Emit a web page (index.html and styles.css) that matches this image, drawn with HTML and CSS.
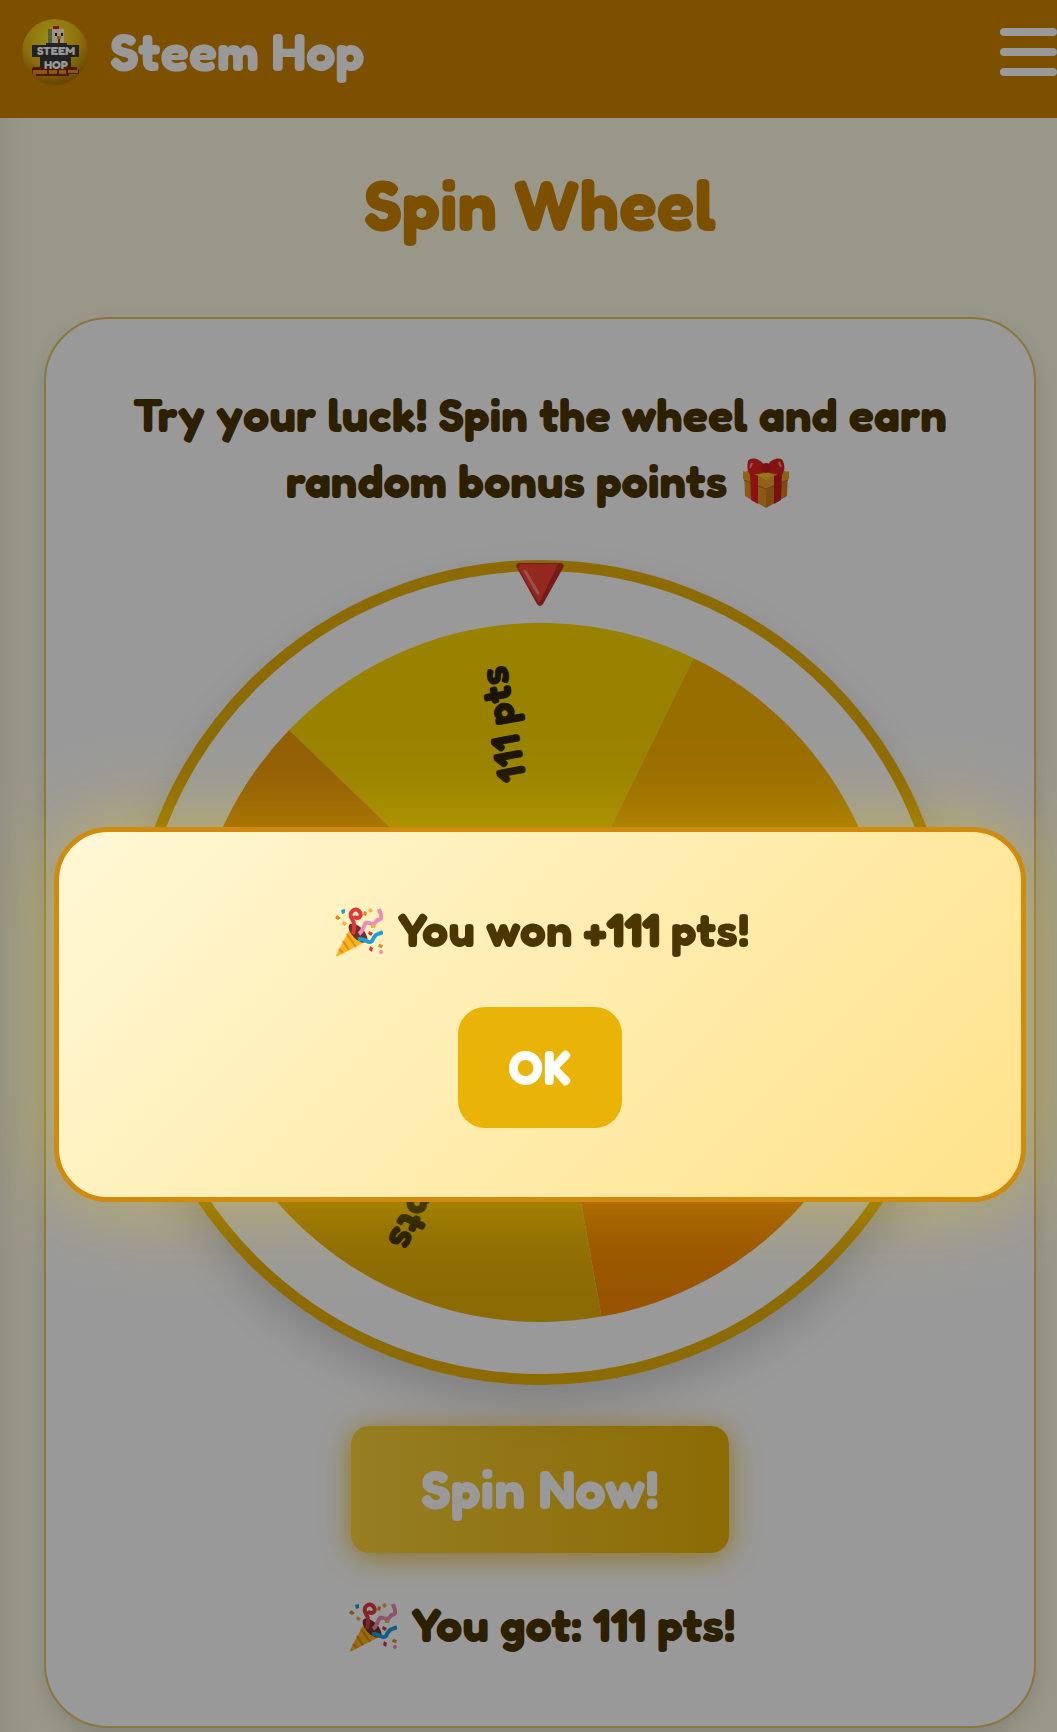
FILE: index.html
```html
<!DOCTYPE html>
<html lang="en">
<head>
    <meta charset="UTF-8">
    <meta name="viewport" content="width=device-width, initial-scale=1.0">
    <title>Steem Hop - Spin Wheel</title>
    <link rel="stylesheet" href="styles.css">
</head>
<body>
    <!-- shared party popper icon -->
    <svg class="icon-defs" aria-hidden="true">
        <symbol id="party" viewBox="0 0 48 50">
            <path d="M17 18 L1 48 Q0 50 3 49 L32 34 Z" fill="#fbb520"/>
            <path d="M12 27 L21 40 M8 34 L14 43 M4 42 L8 46" stroke="#e8870c" stroke-width="2" fill="none"/>
            <ellipse cx="23" cy="26" rx="12" ry="6" transform="rotate(46 23 26)" fill="#6d3329"/>
            <path d="M18 27 C20 20 20 16 17 12 C13 5 20 0 24 4 C29 9 22 14 19 9" stroke="#e0393c" stroke-width="4" fill="none"/>
            <path d="M24 27 C30 23 28 14 34 16 C42 19 41 12 43 13 C49 12 45 6 44 2" stroke="#f08bb8" stroke-width="4" fill="none"/>
            <path d="M23 32 C33 31 32 38 37 34 C41 25 43 28 48 25" stroke="#189fdc" stroke-width="4" fill="none"/>
            <path d="M6 3 L10 2 L10 6 L7 7 Z" fill="#189fdc"/>
            <path d="M2 8 L6 11 L3 13 L0 11 Z M29 4 L32 5 L31 9 L28 8 Z M44 37 L48 38 L47 41 L43 40 Z" fill="#e08a1e"/>
            <path d="M8 14 L12 16 L10 19 L7 17 Z M36 1 L38 4 L35 6 L33 3 Z M36 18 L41 18 L40 21 L36 21 Z" fill="#f3b13a"/>
            <path d="M34 24 L38 26 L36 29 L33 27 Z M35 39 L38 41 L37 45 L34 43 Z" fill="#d23a3a"/>
            <circle cx="46" cy="45" r="2" fill="#f08bb8"/>
        </symbol>
    </svg>

    <header class="header">
        <a class="brand" href="#">
            <svg class="logo" viewBox="0 0 66 66" aria-hidden="true">
                <defs>
                    <radialGradient id="ball" cx="45%" cy="28%" r="75%">
                        <stop offset="0" stop-color="#fff02a"/>
                        <stop offset="0.55" stop-color="#eebb14"/>
                        <stop offset="1" stop-color="#a36a05"/>
                    </radialGradient>
                </defs>
                <circle cx="33" cy="33" r="33" fill="url(#ball)"/>
                <path d="M31 7 H37 V11 H31 Z" fill="#d0271b"/>
                <path d="M26 10 H42 V25 H26 Z" fill="#fff6dc"/>
                <path d="M26 10 H30 V25 H26 Z" fill="#8fa05a"/>
                <path d="M33 14 H35 V17 H33 Z M39 14 H41 V17 H39 Z" fill="#2b1a10"/>
                <path d="M35 17 H39 V20 H35 Z" fill="#f59a14"/>
                <path d="M36 20 H38 V24 H36 Z" fill="#cf2a1a"/>
                <path d="M10 26 H24 V24 H45 V26 H57 V38 H49 V50 H18 V38 H10 Z" fill="#37393a"/>
                <path d="M11 48 H55 V51 H57 V55 H47 V57 H14 V55 H10 V50 Z" fill="#7a2f09"/>
                <path d="M11 51 H25 V55 H11 Z M27 51 H35 V55 H27 Z M37 51 H44 V55 H37 Z M46 51 H56 V54 H46 Z" fill="#f58a1d"/>
                <text class="logo-text" x="34" y="36">STEEM</text>
                <text class="logo-text" x="34" y="50">HOP</text>
            </svg>
            <span class="brand-name">Steem Hop</span>
        </a>
        <button class="menu-btn" type="button" aria-label="Menu">
            <span class="bar"></span>
            <span class="bar"></span>
            <span class="bar"></span>
        </button>
    </header>

    <main class="page">
        <h1 class="page-title">Spin Wheel</h1>

        <section class="card">
            <p class="text">
                Try your luck! Spin the wheel and earn random bonus points
                <svg class="emoji" viewBox="0 0 48 50" role="img" aria-label="gift">
                    <path d="M2 14 L24 7 L46 14 L24 24 Z" fill="#f2a929"/>
                    <path d="M2 14 L24 23 V50 L3 38 Z" fill="#e79424"/>
                    <path d="M46 14 L24 23 V50 L45 38 Z" fill="#d17f1c"/>
                    <path d="M1 13 L24 22 L47 13 V21 L24 31 L1 21 Z" fill="#efa22c"/>
                    <path d="M2 22 L24 31 L46 22" stroke="#b9691b" stroke-width="1" fill="none"/>
                    <path d="M16 17 L24 14 L32 17 L24 22 Z" fill="#ffc526"/>
                    <path d="M8 14 L16 18 V46 L9 42 Z" fill="#e4211d"/>
                    <path d="M40 14 L32 18 V46 L39 42 Z" fill="#c91a1c"/>
                    <path d="M23 8 C18 -1 7 -1 6 3 C5 8 5 12 8 17 C12 15 20 17 24 13 Z" fill="#e72420"/>
                    <path d="M25 8 C30 -1 40 -1 41 3 C43 8 43 12 40 17 C36 15 28 17 24 13 Z" fill="#dc201e"/>
                    <path d="M10 5 L8 10 M37 4 L39 9" stroke="#ff9a8a" stroke-width="2"/>
                    <circle cx="24" cy="10" r="5" fill="#c8191b"/>
                </svg>
            </p>

            <div class="wheel-box">
                <svg class="wheel" viewBox="-349 -349 698 698" role="img" aria-label="Prize wheel">
                    <path d="M0 0 L-251 -242 A349 349 0 0 1 153 -314 Z" fill="#ffd900"/>
                    <path d="M0 0 L153 -314 A349 349 0 0 1 346 49 Z" fill="#ffb700"/>
                    <path d="M0 0 L346 49 A349 349 0 0 1 61 344 Z" fill="#ff8c00"/>
                    <path d="M0 0 L61 344 A349 349 0 0 1 -308 164 Z" fill="#eab308"/>
                    <path d="M0 0 L-308 164 A349 349 0 0 1 -251 -242 Z" fill="#f59e0b"/>
                    <text class="prize" x="309" y="20" transform="rotate(-100)">111 pts</text>
                    <text class="prize" x="309" y="20" transform="rotate(116)">50 pts</text>
                </svg>
                <svg class="pointer" viewBox="0 0 48 44" aria-hidden="true">
                    <path d="M3 0 H45 Q49 1 47 5 L27 41 Q24 45 21 41 L1 5 Q-1 1 3 0 Z" fill="#c4302a"/>
                    <path d="M4 1 H42 L23 40 L2 5 Z" fill="#f44336"/>
                    <path d="M9 8 L22 30" stroke="#ff8a80" stroke-width="3" stroke-linecap="round"/>
                </svg>
            </div>

            <button class="spin-btn" type="button">Spin Now!</button>

            <p class="text">
                <svg class="emoji" aria-hidden="true"><use href="#party"/></svg>
                You got: 111 pts!
            </p>
        </section>
    </main>

    <div class="overlay">
        <div class="popup" role="dialog" aria-modal="true" aria-labelledby="popup-message">
            <p class="text" id="popup-message">
                <svg class="emoji" aria-hidden="true"><use href="#party"/></svg>
                You won <b>+111</b> pts!
            </p>
            <button class="ok-btn" type="button">OK</button>
        </div>
    </div>
</body>
</html>
```

FILE: styles.css
```css
* {
    box-sizing: border-box;
}

body {
    margin: 0;
    background: #fffbe6;
    color: #4b3600;
    font-family: Fredoka, Lato, sans-serif;
    font-weight: 700;
}

button {
    border: none;
    font: inherit;
    color: #fff;
    cursor: pointer;
}

.icon-defs {
    display: none;
}

/* Header */
.header {
    height: 118px;
    padding: 19px 0 33px 22px;
    background: #d08500;
    display: flex;
    justify-content: space-between;
    align-items: center;
}

.brand {
    display: flex;
    align-items: center;
    gap: 22px;
    color: #fff;
    text-decoration: none;
}

.logo {
    width: 66px;
    height: 66px;
}

.logo-text {
    font-size: 12px;
    fill: #fff;
    text-anchor: middle;
}

.brand-name {
    font-size: 53px;
    line-height: 66px;
}

.menu-btn {
    padding: 0;
    background: none;
    display: flex;
    flex-direction: column;
    gap: 12px;
}

.bar {
    width: 57px;
    height: 8px;
    border-radius: 4px;
    background: #fff;
}

/* Page */
.page {
    padding: 45px 21px 4px 44px;
    box-shadow: inset 34px 0 30px -30px rgba(0, 0, 0, 0.08);
}

.page-title {
    margin: 0 0 70px;
    color: #d08500;
    font-size: 70px;
    font-weight: 700;
    line-height: 84px;
    text-align: center;
}

.card {
    padding: 63px 72px 68px;
    background: #fff;
    border: 2px solid #e6c765;
    border-radius: 64px;
    box-shadow: 0 10px 20px rgba(0, 0, 0, 0.12);
    display: flex;
    flex-direction: column;
    align-items: center;
}

.text {
    margin: 0;
    font-size: 47px;
    line-height: 66px;
    text-align: center;
}

.text b {
    -webkit-text-stroke: 1px #4b3600;
}

.emoji {
    width: 48px;
    height: 50px;
    margin: 0 4px;
    vertical-align: -10px;
}

/* Wheel */
.wheel-box {
    position: relative;
    width: 100%;
    max-width: 825px;
    aspect-ratio: 1;
    margin: 46px 0 41px;
    border: 11px solid #eab308;
    border-radius: 50%;
    box-shadow: 0 20px 40px rgba(0, 0, 0, 0.16);
    display: flex;
    justify-content: center;
    align-items: center;
}

.wheel {
    width: 87%;
}

.prize {
    font-size: 42px;
    fill: #2e2400;
    text-anchor: end;
}

.pointer {
    position: absolute;
    top: -8px;
    left: 50%;
    width: 48px;
    margin-left: -24px;
}

.spin-btn {
    margin-bottom: 39px;
    padding: 30px 70px 31px;
    background: linear-gradient(90deg, #fad23a, #eab308);
    border-radius: 18px;
    box-shadow: 0 4px 30px rgba(234, 179, 8, 0.8);
    font-size: 55px;
    line-height: 66px;
}

/* Popup */
.overlay {
    position: fixed;
    inset: 0;
    padding: 297px 31px 0 54px;
    background: rgba(0, 0, 0, 0.4);
    display: flex;
    align-items: center;
}

.popup {
    flex: 1;
    padding: 65px 64px 69px;
    background: linear-gradient(135deg, #fff8d6, #ffe28a);
    border: 5px solid #d08a0e;
    border-radius: 54px;
    box-shadow: 0 0 80px rgba(255, 215, 0, 0.4);
    display: flex;
    flex-direction: column;
    align-items: center;
    gap: 44px;
}

.ok-btn {
    padding: 27px 50px 28px;
    background: #eab308;
    border-radius: 27px;
    font-size: 48px;
    line-height: 66px;
}
```
